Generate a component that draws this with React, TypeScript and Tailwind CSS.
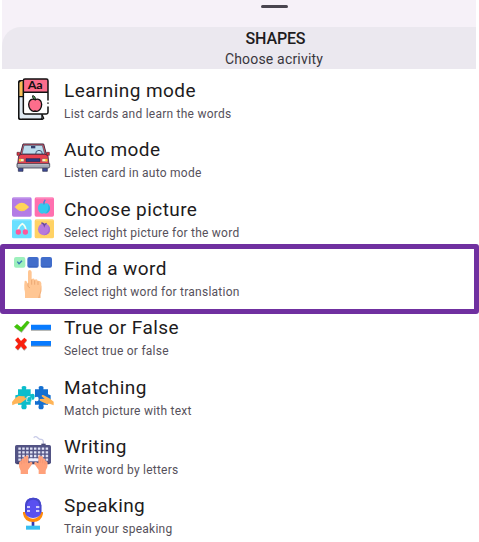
import React from "react";

const art: React.ReactNode[] = [
  <g key="cards" strokeLinejoin="round" strokeLinecap="round">
    <rect x="56" y="32" width="70" height="116" rx="5" fill="#dfe9f2" stroke="#111" strokeWidth="4" />
    <path d="M58 41q0-7 8-7h4v46H58z" fill="#f9bd55" />
    <path d="M57 80h12M126 148h-64q-6 0-6-7V40q0-7 8-8" fill="none" stroke="#111" strokeWidth="4" />
    <path d="M127 136l4 9-5 3H66" fill="none" stroke="#111" strokeWidth="4" />
    <rect x="70" y="27" width="74" height="105" rx="5" fill="#fff" />
    <path d="M70 67V32q0-5 5-5h64q5 0 5 5v35z" fill="#fc6e8c" />
    <path d="M144 90V32q0-5-5-5H75q-5 0-5 5v95q0 5 5 5h64q5 0 5-5v-16M144 99v1M70 67h74" fill="none" stroke="#111" strokeWidth="4.5" />
    <path d="M105 89c-9-5-19 2-19 14 0 11 7 21 14 21l5-1 6 1c7 0 14-10 14-21 0-12-10-19-20-14z" fill="#fc6e8c" stroke="#111" strokeWidth="4" />
    <path d="M106 89c1-8-3-12-8-12-1 6 2 10 8 12z" fill="#62c96c" stroke="#111" strokeWidth="3" />
    <text x="83" y="58" fontSize="32" fontWeight="700" fill="#111" textLength="45" lengthAdjust="spacingAndGlyphs" className="font-['Lato',sans-serif]">Aa</text>
  </g>,
  <g key="car" strokeLinejoin="round">
    <path d="M55 109h14v16H55zM128 109h14v16h-14z" fill="#3e4b96" stroke="#25294a" strokeWidth="2" />
    <path d="M69 43h62l9 34H60z" fill="#eb5360" stroke="#3a2e45" strokeWidth="3" />
    <path d="M72 47h55l7 26H66z" fill="#bddced" stroke="#3d4b63" strokeWidth="2" />
    <path d="M93 49h13v7H93z" fill="#34406f" />
    <path d="M107 74q-1-12 10-12t10 12" fill="none" stroke="#435675" strokeWidth="3" />
    <path d="M56 78q4-4 11-4h66q7 0 11 4l3 26H53z" fill="#e84150" stroke="#43273d" strokeWidth="2.5" />
    <path d="M51 68h8v9h-8zM140 68h8v9h-8z" fill="#e5303c" stroke="#542b3a" strokeWidth="2" />
    <path d="M78 87h42v9H78z" fill="#273984" stroke="#25294a" strokeWidth="2" />
    <path d="M57 87h15v9H57zM126 87h16v9h-16z" fill="#fff4c2" stroke="#854145" strokeWidth="1.5" />
    <path d="M57 88h6v7h-6zM136 88h6v7h-6z" fill="#ffc928" />
    <path d="M51 102h98v9q0 4-5 4H56q-5 0-5-4z" fill="#a2a8b6" stroke="#434354" strokeWidth="2.5" />
    <path d="M54 105h92" stroke="#d4d9e0" strokeWidth="2" />
  </g>,
  <g key="pictures">
    <rect x="36" y="21" width="59" height="58" rx="5" fill="#b37be5" />
    <rect x="104" y="21" width="58" height="58" rx="5" fill="#ff70af" />
    <rect x="36" y="87" width="59" height="57" rx="5" fill="#6be0ff" />
    <rect x="104" y="87" width="58" height="57" rx="5" fill="#ffd264" />
    <path d="M40 23h50M108 23h50M40 89h50M108 89h50" stroke="#fff" strokeOpacity=".3" strokeWidth="3" />
    <path d="M43 50q4-2 7-6 15-14 31 0 3 5 7 6-3 1-7 6-16 13-31 0-3-4-7-6z" fill="#ffd45b" />
    <path d="M51 54q14 9 29 1-14 13-29-1z" fill="#f7c44d" />
    <path d="M132 41c-9-6-18 1-18 12 0 10 8 18 13 17 4-2 6-2 10 0 6 1 13-8 13-17 0-11-9-18-18-12z" fill="#36c8ee" />
    <path d="M132 42q-1-9 4-14" fill="none" stroke="#378cdc" strokeWidth="4" />
    <path d="M144 43q5 14-7 25 13-2 13-15 0-6-6-10z" fill="#28afde" />
    <path d="M53 122q3-15 14-22 10 6 11 21" fill="none" stroke="#f0fff3" strokeWidth="5" strokeLinecap="round" />
    <circle cx="55" cy="125" r="8" fill="#ff589b" /><circle cx="76" cy="125" r="8" fill="#ff589b" />
    <circle cx="132" cy="117" r="18" fill="#b779dc" />
    <path d="M144 104q9 21-13 31 20-1 19-18 0-8-6-13z" fill="#a56bd4" />
    <path d="M124 98q7 0 9 8 3-7 7-7" fill="none" stroke="#674b9f" strokeWidth="4" />
  </g>,
  <g key="word">
    <rect x="42" y="51" width="34" height="32" rx="6" fill="#9df0bd" />
    <path d="M52 65l5 6 9-9" fill="none" stroke="#3477b4" strokeWidth="4" />
    <rect x="82" y="51" width="34" height="32" rx="6" fill="#416dcb" />
    <rect x="122" y="51" width="34" height="32" rx="6" fill="#416dcb" />
    <path d="M86 80h26M126 80h26" fill="none" stroke="#3862bd" strokeWidth="3" />
    <path d="M75 174v-15q0-5-2-11-1-13 1-25 4-3 7 3l3 8V96q0-6 5-6t6 6v22q6-5 9 1 7-3 9 3 9-1 11 7v22q0 7-3 12v11z" fill="#ffc693" />
    <path d="M95 119v15M104 121v13M114 124v11M84 129v10l6 5" fill="none" stroke="#e7a26e" strokeWidth="2.5" />
    <path d="M124 135v16q0 7-3 12v11h-7c3-11 8-18 8-30z" fill="#f4b27c" />
  </g>,
  <g key="truth">
    <path d="M44 54l9-8 11 10 18-23 7 6-24 31z" fill="#858585" opacity=".55" />
    <path d="M42 51l9-8 12 10 18-20 8 5-25 29z" fill="#42c40a" />
    <path d="M93 49h60v14H93zM93 97h60v14H93z" fill="#a1a29e" />
    <path d="M93 45h60v15H93zM93 94h60v14H93z" fill="#087bff" />
    <path d="M46 93l8-7 9 10 10-9 8 7-9 11 9 11-8 8-10-11-9 10-8-7 9-11z" fill="#8f8f8f" opacity=".6" />
    <path d="M45 91l9-8 9 11 10-10 8 7-9 11 9 11-9 8-9-11-9 11-9-8 10-11z" fill="#f9200e" />
  </g>,
  <g key="matching">
    <path d="M54 57h12q-4-10 6-10t6 10h14v15q11-5 12 4 0 17-12 11v16H79q4 14-7 14-11 0-7-14H54V89l-8 2V75l8-2z" fill="#0bbdcb" />
    <path d="M80 79q9-3 14 3 3 8-5 11l-10 1" fill="#fff" />
    <path d="M105 57h12q-4-10 6-10t7 10h14v15l8 3v17l-8-2v13h-14q4 14-7 14-11 0-6-14h-12V91q11 5 11-5t-11-5z" fill="#136fd1" />
    <path d="M83 81q8-2 11-1v13q-8 2-13-1z" fill="#0bbdcb" />
    <path d="M37 105l-1-10q7-13 20-18l17 1q5 3-2 6l-9 2 14-4q6 0 2 5L62 99l-15 1z" fill="#ffb457" />
    <path d="M161 105V94l-13-10-17-9q-6-3-6 3l9 7-14 1q-4 3 1 6l19 9 9-1z" fill="#ffb457" />
  </g>,
  <g key="writing">
    <path d="M101 23q6-6 12 0t11 5q5 0 6 7v10" fill="none" stroke="#c9cce8" strokeWidth="4" />
    <path d="M124 47v-6h13v6" fill="#4b4a77" />
    <rect x="45" y="45" width="108" height="57" rx="5" fill="#525384" />
    <path d="M50 100h98" stroke="#424067" strokeWidth="5" />
    <path d="M55 56h90M55 67h90M55 78h90M55 89h90" stroke="#dfe2f5" strokeWidth="7" strokeDasharray="7.5 4.2" />
    <path d="M87 85h27v9H87z" fill="#edefff" />
    <path d="M62 132v-10q-7-10-5-24 2-6 7-5v-5q3-5 7 0v-6q4-8 7 0v-4q5-6 7 2v20l8-5q7 2 3 8l-12 17v12z" fill="#ffa17b" />
    <path d="M137 132v-10q7-10 6-24-2-6-7-5v-5q-3-5-7 0v-6q-4-8-7 0v-4q-5-6-7 2v20l-8-5q-7 2-3 8l12 17v12z" fill="#ffa17b" />
    <path d="M65 94v9M72 89v11M79 86v12M121 86v12M128 89v11M135 94v9" stroke="#ef8b70" strokeWidth="1.5" />
  </g>,
  <g key="speaking">
    <path d="M95 108h8v18h-8z" fill="#3638af" />
    <path d="M78 123h42v12H78z" fill="#38bff1" />
    <path d="M69 82h8q4 20 22 20t23-20h7v5q-4 24-30 25-26-1-30-25z" fill="#ff8b0c" />
    <path d="M75 83V62q1-22 24-23 24 1 25 23v21q-3 16-25 17-21-1-24-17z" fill="#5950f0" />
    <path d="M78 83V63q1-20 21-21t22 21v20" fill="none" stroke="#4547c8" strokeWidth="6" />
    <path d="M81 67h9M81 79h9M108 67h10M108 79h10" stroke="#f7f5ff" strokeWidth="4" />
  </g>,
];

const activities = [
  ["Learning mode", "List cards and learn the words", "33 -3 132 178"],
  ["Auto mode", "Listen card in auto mode", "33 -5 132 178"],
  ["Choose picture", "Select right picture for the word", "33 -7 132 178"],
  ["Find a word", "Select right word for translation", "33 21 132 178"],
  ["True or False", "Select true or false", "33 -11 132 178"],
  ["Matching", "Match picture with text", "33 -13 132 178"],
  ["Writing", "Write word by letters", "33 -15 132 178"],
  ["Speaking", "Train your speaking", "33 -2 132 178"],
];

export default function App() {
  return (
    <div className="relative h-[542px] w-[479px] overflow-hidden bg-white font-['Roboto',sans-serif]">
      <header className="ml-[2px] h-[69px] w-[474px] bg-[#f6f1f8]">
        <div className="flex h-[27px] justify-center pt-[5px] pl-[70px]">
          <div className="h-[3px] w-[27px] rounded-full bg-[#49454f]" />
        </div>
        <div className="flex h-[42px] flex-col items-center rounded-tl-[19px] bg-[#ebe8ef] pl-[70px] text-[#1d1b20]">
          <h1 className="mt-[2px] ml-[3px] text-base leading-[19px] font-medium tracking-[-0.15px]">SHAPES</h1>
          <p className="text-sm leading-[22px] tracking-[0.18px] text-[#39363d]">Choose acrivity</p>
        </div>
      </header>
      <main>
        {activities.map(([title, description, box], i) => (
          <section key={title} className="flex h-[59.333px]">
            <svg viewBox={box} className="ml-[11px] h-[59.333px] w-11 shrink-0">{art[i]}</svg>
            <div className="ml-[9px] pt-2">
              <h2 className="text-[19px] leading-7 tracking-[0.43px] text-[#1d1b20]">{title}</h2>
              <p className="text-xs leading-[18px] tracking-[0.24px] text-[#56515b]">{description}</p>
            </div>
          </section>
        ))}
      </main>
      <div className="pointer-events-none absolute top-[244px] left-0 h-[70px] w-[479px] rounded-[3px] border-[5px] border-[#7030a0]" />
    </div>
  );
}
